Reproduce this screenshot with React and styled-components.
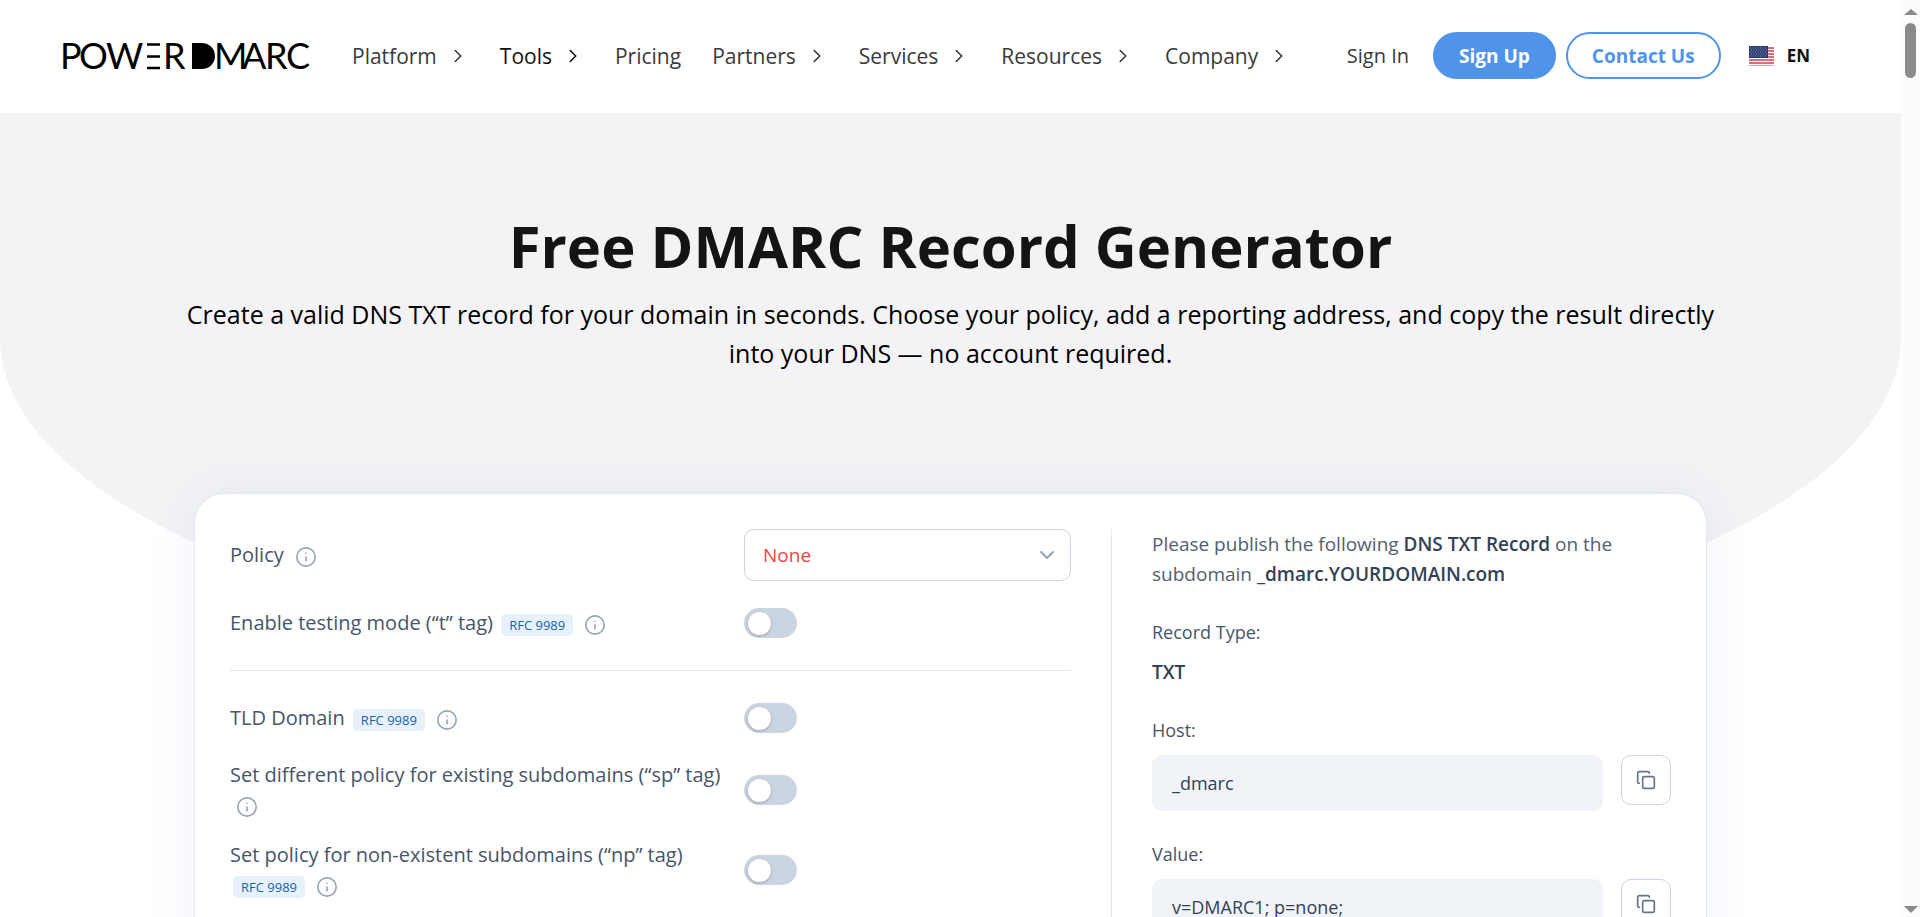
import React, { useState } from "react";
import styled, { createGlobalStyle } from "styled-components";
import { ChevronDown, ChevronRight, Copy, Info } from "lucide-react";

const GlobalStyle = createGlobalStyle`
  * {
    box-sizing: border-box;
  }

  body {
    margin: 0;
    font-family: "Open Sans", "Noto Sans", sans-serif;
    color: #475569;
    background-color: #fff;
  }

  button,
  input,
  select {
    font-family: inherit;
  }
`;

const Window = styled.div`
  width: 100%;
  height: 100vh;
  display: flex;
`;

const Page = styled.div`
  flex: 1;
  min-width: 0;
  overflow-x: hidden;
  overflow-y: auto;
  scrollbar-width: none;
`;

const ScrollRail = styled.div`
  width: 19px;
  padding: 9px 0 4px;
  display: flex;
  flex-direction: column;
  align-items: center;
  background-color: #fcfcfc;
`;

const ScrollArrow = styled.span`
  border-left: 7px solid transparent;
  border-right: 7px solid transparent;
  border-bottom: ${({ $down }) => ($down ? "0" : "6px solid #8b8b8b")};
  border-top: ${({ $down }) => ($down ? "7px solid #8b8b8b" : "0")};
  margin-top: ${({ $down }) => ($down ? "auto" : "0")};
`;

const ScrollThumb = styled.div`
  width: 11px;
  height: 55px;
  margin-top: 8px;
  border-radius: 6px;
  background-color: #8b8b8b;
`;

// Header
const Header = styled.header`
  height: 113px;
  padding: 0 91px 2px 62px;
  display: flex;
  align-items: center;
  background-color: white;
`;

const HomeLink = styled.a`
  display: flex;
  margin-right: 42px;
  color: black;
`;

const LogoText = styled.text`
  font-family: Lato, sans-serif;
  font-size: 36px;
  fill: currentColor;
`;

const Nav = styled.nav`
  display: flex;
  align-items: center;
  gap: 31px;
`;

const NavLink = styled.a`
  display: flex;
  align-items: center;
  gap: 10px;
  font-size: 21px;
  line-height: 30px;
  color: ${({ $active }) => ($active ? "#111" : "#3a3a3a")};
  text-decoration: none;
  white-space: nowrap;
`;

const Actions = styled.div`
  display: flex;
  align-items: center;
  margin-left: auto;
`;

const SignInLink = styled.a`
  margin-right: 24px;
  font-size: 20px;
  line-height: 30px;
  color: #3a3a3a;
  text-decoration: none;
  white-space: nowrap;
`;

const PillLink = styled.a`
  height: 47px;
  padding: 0 24px;
  margin-right: 10px;
  display: flex;
  align-items: center;
  font-size: 19px;
  font-weight: 700;
  white-space: nowrap;
  text-decoration: none;
  border: 2px solid #4f93ea;
  border-radius: 24px;
  color: ${({ $filled }) => ($filled ? "white" : "#4f93ea")};
  background-color: ${({ $filled }) => ($filled ? "#4f93ea" : "white")};
`;

const LangButton = styled.button`
  padding: 0;
  margin-left: 18px;
  display: flex;
  align-items: center;
  gap: 13px;
  font-size: 17px;
  font-weight: 700;
  color: #111;
  border: 0;
  background: none;
  cursor: pointer;
`;

// Hero
const Hero = styled.section`
  padding: 98px 40px 303px;
  text-align: center;
  background-color: #f3f3f5;
  border-radius: 0 0 50% 50% / 0 0 60% 60%;
`;

const Title = styled.h1`
  margin: 0 0 14px;
  font-size: 58px;
  line-height: 70px;
  font-weight: 700;
  color: #141416;
`;

const Subtitle = styled.p`
  max-width: 1560px;
  margin: 0 auto;
  font-size: 25px;
  line-height: 39px;
  color: #000;
`;

// Generator card
const Card = styled.main`
  max-width: 1513px;
  min-height: 640px;
  margin: -183px auto 80px;
  padding: 35px;
  display: grid;
  grid-template-columns: 841fr 600fr;
  background-color: white;
  border: 1px solid #e1e8f2;
  border-radius: 30px;
  box-shadow: 0 0 50px rgba(60, 90, 220, 0.08);
`;

const Form = styled.form`
  display: flex;
  flex-direction: column;
  gap: 20px;
`;

const Row = styled.div`
  min-height: 44px;
  display: grid;
  grid-template-columns: 1fr 327px;
  align-items: center;
`;

const LabelCell = styled.div`
  font-size: 20px;
  line-height: 30px;
`;

const Badge = styled.span`
  display: inline-block;
  height: 22px;
  padding: 0 8px;
  margin-left: 3px;
  font-size: 13px;
  line-height: 22px;
  color: #1d62a8;
  vertical-align: middle;
  background-color: #e6f1fb;
  border-radius: 5px;
`;

const InfoButton = styled.button`
  width: 22px;
  height: 22px;
  padding: 0;
  margin-left: 6px;
  display: inline-flex;
  vertical-align: middle;
  color: #94a3b8;
  border: 0;
  background: none;
  cursor: pointer;
`;

const SelectBox = styled.div`
  position: relative;
  display: flex;
  align-items: center;
`;

const Select = styled.select`
  width: 100%;
  height: 52px;
  padding: 0 18px;
  appearance: none;
  font-size: 19px;
  color: #ef4444;
  background-color: white;
  border: 1px solid #cbd5e1;
  border-radius: 10px;
`;

const SelectArrow = styled(ChevronDown)`
  position: absolute;
  right: 12px;
  color: #94a3b8;
  pointer-events: none;
`;

const Switch = styled.input`
  width: 53px;
  height: 30px;
  margin: 0;
  padding: 4px;
  display: flex;
  align-items: center;
  appearance: none;
  justify-content: ${({ checked }) => (checked ? "flex-end" : "flex-start")};
  background-color: ${({ checked }) => (checked ? "#4f93ea" : "#cbd5e1")};
  border-radius: 15px;
  cursor: pointer;

  &::before {
    content: "";
    width: 23px;
    height: 23px;
    border-radius: 50%;
    background-color: white;
    box-shadow: 0 1px 3px rgba(0, 0, 0, 0.25);
  }
`;

const Divider = styled.hr`
  width: 100%;
  margin: 5px 0;
  border: 0;
  border-top: 1px solid #e1e8ef;
`;

const Result = styled.section`
  margin-left: 40px;
  padding-left: 40px;
  display: flex;
  flex-direction: column;
  gap: 28px;
  border-left: 1px solid #e1e8ef;
`;

const Notice = styled.p`
  margin: 0;
  font-size: 19px;
  line-height: 30px;
  color: #52606f;

  strong {
    font-weight: 600;
    color: #334155;
  }
`;

const Field = styled.div`
  display: flex;
  flex-direction: column;
  gap: 10px;
`;

const FieldLabel = styled.label`
  font-size: 18px;
  line-height: 30px;
`;

const FieldText = styled.output`
  font-size: 19px;
  line-height: 30px;
  font-weight: 600;
  color: #334155;
`;

const FieldRow = styled.div`
  display: flex;
  gap: 18px;
`;

const FieldInput = styled.input`
  flex: 1;
  min-width: 0;
  height: 56px;
  padding: 0 20px;
  font-size: 18px;
  color: #334155;
  background-color: #f0f4f9;
  border: 0;
  border-radius: 10px;
`;

const CopyButton = styled.button`
  width: 50px;
  height: 50px;
  padding: 0;
  display: flex;
  align-items: center;
  justify-content: center;
  color: #64748b;
  background-color: white;
  border: 1px solid #cbd5e1;
  border-radius: 10px;
  cursor: pointer;
`;

const menu = [
  { name: "Platform", sub: true },
  { name: "Tools", sub: true, active: true },
  { name: "Pricing" },
  { name: "Partners", sub: true },
  { name: "Services", sub: true },
  { name: "Resources", sub: true },
  { name: "Company", sub: true },
];

const options = [
  { id: "tld", text: "TLD Domain", rfc: true },
  { id: "sp", text: "Set different policy for existing subdomains (“sp” tag)" },
  {
    id: "np",
    text: "Set policy for non-existent subdomains (“np” tag)",
    rfc: true,
  },
];

const Logo = () => (
  <svg width="248" height="28" viewBox="0 0 248 28" overflow="visible" aria-hidden="true">
    <LogoText x="-2 17 44 101" y="27">
      POWR
    </LogoText>
    <path d="M85 2.5h13M85 14.5h13M85 26h13" stroke="currentColor" strokeWidth="2.5" />
    <path d="M130 1h10a13 13 0 0 1 0 26H130z" fill="currentColor" />
    <LogoText x="152 180 203 224" y="27">
      MARC
    </LogoText>
  </svg>
);

const Flag = () => (
  <svg width="25" height="20" viewBox="0 0 25 20" aria-hidden="true">
    <rect width="25" height="20" fill="#fff" />
    <path
      d="M0 2h25M0 5h25M0 8h25M0 11h25M0 14h25M0 17h25"
      stroke="#c8414b"
      strokeWidth="1.5"
    />
    <path d="M0 19.500h25" stroke="#e8a0a4" strokeWidth="1" />
    <rect width="19" height="12" fill="#2a3b6e" />
    <path
      d="M1 2h17M2 4h16M1 6h17M2 8h16M1 10h17"
      stroke="#8f9abb"
      strokeWidth="1"
      strokeDasharray="1 1.5"
    />
  </svg>
);

const InfoTip = ({ about }) => (
  <InfoButton type="button" aria-label={`About ${about}`}>
    <Info size={22} strokeWidth={1.75} />
  </InfoButton>
);

const OptionRow = ({ id, text, rfc }) => {
  const [on, setOn] = useState(false);

  return (
    <Row>
      <LabelCell>
        <label htmlFor={id}>{text}</label> {rfc && <Badge>RFC 9989</Badge>}{" "}
        <InfoTip about={text} />
      </LabelCell>
      <Switch
        id={id}
        type="checkbox"
        role="switch"
        checked={on}
        onChange={(e) => setOn(e.target.checked)}
      />
    </Row>
  );
};

const CopyField = ({ id, label, value }) => (
  <Field>
    <FieldLabel htmlFor={id}>{label}</FieldLabel>
    <FieldRow>
      <FieldInput id={id} value={value} readOnly />
      <CopyButton
        type="button"
        aria-label={`Copy ${label}`}
        onClick={() => navigator.clipboard.writeText(value)}
      >
        <Copy size={20} strokeWidth={2} />
      </CopyButton>
    </FieldRow>
  </Field>
);

const App = () => {
  const [policy, setPolicy] = useState("none");

  return (
    <Window>
      <GlobalStyle />
      <Page>
        <Header>
          <HomeLink href="#" aria-label="PowerDMARC">
            <Logo />
          </HomeLink>
          <Nav>
            {menu.map(({ name, sub, active }) => (
              <NavLink key={name} href="#" $active={active}>
                {name}
                {sub && <ChevronRight size={22} strokeWidth={1.75} />}
              </NavLink>
            ))}
          </Nav>
          <Actions>
            <SignInLink href="#">Sign In</SignInLink>
            <PillLink href="#" $filled>
              Sign Up
            </PillLink>
            <PillLink href="#">Contact Us</PillLink>
            <LangButton type="button">
              <Flag />
              EN
            </LangButton>
          </Actions>
        </Header>
        <Hero>
          <Title>Free DMARC Record Generator</Title>
          <Subtitle>
            Create a valid DNS TXT record for your domain in seconds. Choose
            your policy, add a reporting address, and copy the result directly
            into your DNS — no account required.
          </Subtitle>
        </Hero>
        <Card>
          <Form>
            <Row>
              <LabelCell>
                <label htmlFor="policy">Policy</label>{" "}
                <InfoTip about="Policy" />
              </LabelCell>
              <SelectBox>
                <Select
                  id="policy"
                  value={policy}
                  onChange={(e) => setPolicy(e.target.value)}
                >
                  <option value="none">None</option>
                  <option value="quarantine">Quarantine</option>
                  <option value="reject">Reject</option>
                </Select>
                <SelectArrow size={24} strokeWidth={2} />
              </SelectBox>
            </Row>
            <OptionRow id="t" text="Enable testing mode (“t” tag)" rfc />
            <Divider />
            {options.map((option) => (
              <OptionRow key={option.id} {...option} />
            ))}
          </Form>
          <Result>
            <Notice>
              Please publish the following <strong>DNS TXT Record</strong> on
              the
              <br />
              subdomain <strong>_dmarc.YOURDOMAIN.com</strong>
            </Notice>
            <Field>
              <FieldLabel htmlFor="type">Record Type:</FieldLabel>
              <FieldText id="type">TXT</FieldText>
            </Field>
            <CopyField id="host" label="Host:" value="_dmarc" />
            <CopyField id="value" label="Value:" value={`v=DMARC1; p=${policy};`} />
          </Result>
        </Card>
      </Page>
      <ScrollRail aria-hidden="true">
        <ScrollArrow />
        <ScrollThumb />
        <ScrollArrow $down />
      </ScrollRail>
    </Window>
  );
};

export default App;
